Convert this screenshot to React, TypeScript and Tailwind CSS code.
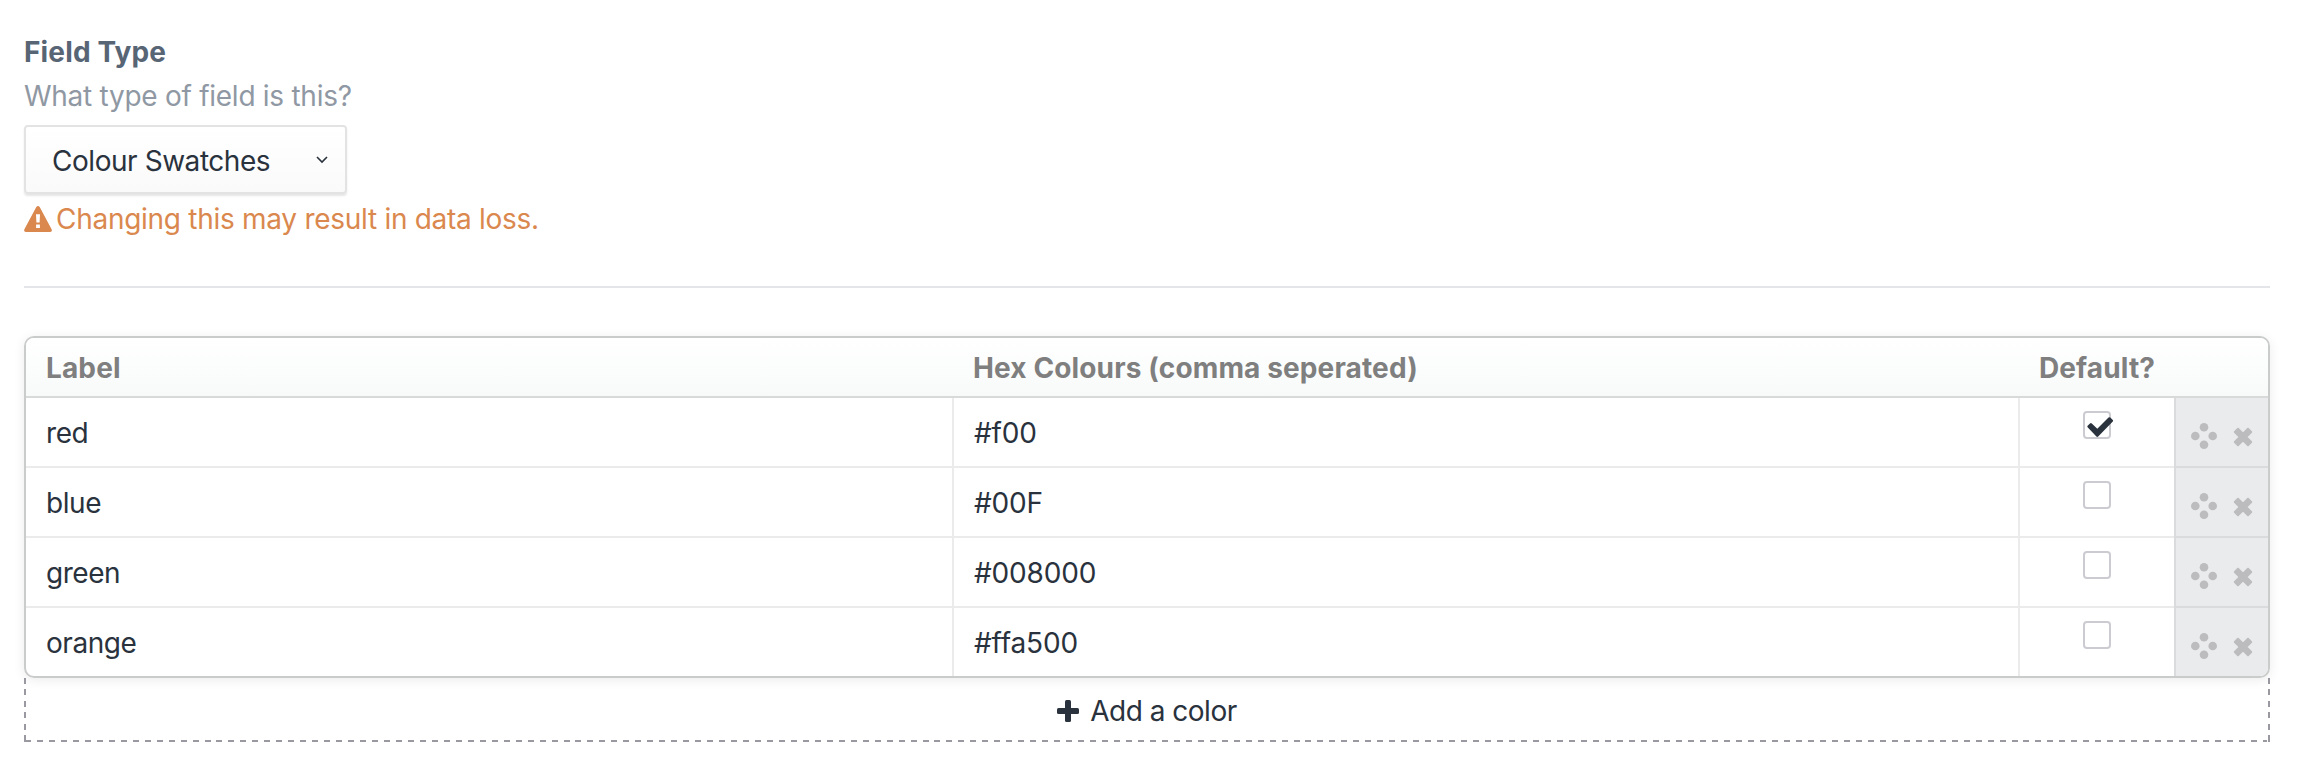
const rows = [
  { label: 'red', hex: '#f00', checked: true },
  { label: 'blue', hex: '#00F', checked: false },
  { label: 'green', hex: '#008000', checked: false },
  { label: 'orange', hex: '#ffa500', checked: false },
];

function AlertIcon() {
  return (
    <svg className="h-[26px] w-[28px] shrink-0" viewBox="0 0 28 26">
      <path
        fillRule="evenodd"
        fill="#DA884E"
        d="M12.3 1.1Q14 -1 15.7 1.1L27.6 23.2Q28.6 25.6 26.2 26H1.8Q-.6 25.6 .4 23.2ZM12 8.2L12.4 16.4H15.6L16 8.2ZM12.1 18.5V22H15.9V18.5Z"
      />
    </svg>
  );
}

function MoveIcon() {
  return (
    <svg className="h-[26px] w-[26px]" viewBox="0 0 26 26" fill="#BCBCBF">
      <circle cx="13" cy="4.3" r="4.3" />
      <circle cx="4.3" cy="13" r="4.3" />
      <circle cx="21.7" cy="13" r="4.3" />
      <circle cx="13" cy="21.7" r="4.3" />
    </svg>
  );
}

function RemoveIcon() {
  return (
    <svg className="h-5 w-5" viewBox="0 0 20 20" stroke="#BCBCBF" strokeWidth="2" strokeLinejoin="round" fill="#BCBCBF">
      <path d="M5 1.8L10 6.8L15 1.8L18.2 5L13.2 10L18.2 15L15 18.2L10 13.2L5 18.2L1.8 15L6.8 10L1.8 5Z" />
    </svg>
  );
}

function Checkbox({ checked }: { checked: boolean }) {
  return (
    <div className="relative h-7 w-7 rounded-[4px] border-2 border-[#CCCBD2] bg-white">
      {checked && (
        <svg className="absolute top-[3px] left-[2px] h-[22px] w-[27px]" viewBox="0 0 27 22">
          <path
            fill="#29323D"
            d="M.6 11.2Q0 10.4 .6 9.7L3 7.4Q4 6.7 4.8 7.4L10.3 12.7L21.5 1.6Q22.4 .8 23.3 1.6L25.8 4Q26.5 4.8 25.8 5.6L11.2 20.6Q10.3 21.4 9.4 20.6Z"
          />
        </svg>
      )}
    </div>
  );
}

export default function App() {
  return (
    <div className="h-[762px] w-full bg-white pt-8 pr-7 pl-6 font-[Inter,sans-serif] text-[28px] leading-10 text-[#29323D]">
      <div className="font-bold tracking-[0.15px] text-[#576575]"><span>Field Type</span></div>
      <div className="mt-1 tracking-[-0.27px] text-[#8F98A3]"><span>What type of field is this?</span></div>
      <div className="mt-[9px] flex h-[69px] w-[323px] items-center justify-between rounded-[4px] border-2 border-[#E3E3E3] bg-linear-to-b from-white to-[#FAFAFA] pr-[17px] pl-[26px] shadow-[0_2px_2px_rgba(0,0,0,0.1)]">
        <span className="pt-[3px] tracking-[-0.45px]">Colour Swatches</span>
        <svg className="h-[8px] w-3" viewBox="0 0 12 8" fill="none" stroke="#29323D" strokeWidth="1.6">
          <path d="M1 1L6 6L11 1" />
        </svg>
      </div>
      <div className="mt-[5px] flex items-center text-[#DA884E]">
        <AlertIcon />
        <span className="ml-1 tracking-[-0.28px]">Changing this may result in data loss.</span>
      </div>
      <div className="mt-[47px] h-0.5 bg-[#E3E5E8]" />
      <div className="mt-12 h-[342px] overflow-hidden rounded-[10px] border-2 border-[#CACBCB] shadow-[0_2px_12px_rgba(0,0,0,0.08)]">
        <div className="grid h-[60px] grid-cols-[928px_1066px_156px_92px] items-center border-b-2 border-[#D8DADA] bg-linear-to-b from-white to-[#F8FAFA] pt-0.5 font-bold tracking-[0.13px] text-[#7F7F7F]">
          <span className="pl-5">Label</span>
          <span className="pl-[19px]">Hex Colours (comma seperated)</span>
          <span className="pr-[2px] text-center">Default?</span>
        </div>
        {rows.map((row) => (
          <div key={row.label} className="grid h-[70px] grid-cols-[926px_1066px_156px_94px]">
            <div className="flex items-center border-b-2 border-[#EBEBEC] pt-px pl-5"><span className="tracking-[-0.45px]">{row.label}</span></div>
            <div className="flex items-center border-b-2 border-l-2 border-[#EBEBEC] pt-px pl-5"><span className="tracking-[-0.15px]">{row.hex}</span></div>
            <div className="flex justify-center border-b-2 border-l-2 border-[#EBEBEC] pt-[13px]">
              <Checkbox checked={row.checked} />
            </div>
            <div className="flex items-start border-b-2 border-l-2 border-[#DADBDC] bg-[#EAEBED] pt-[25px] pl-[15px]">
              <MoveIcon />
              <span className="mt-1 ml-4"><RemoveIcon /></span>
            </div>
          </div>
        ))}
      </div>
      <div className="flex h-16 bg-[repeating-linear-gradient(to_right,#9A99A1_0_6px,transparent_6px_11.967px)] bg-[length:calc(100%_-_4px)_2px] bg-[position:1px_bottom] bg-no-repeat">
        <div className="w-0.5 bg-[repeating-linear-gradient(to_bottom,#9A99A1_0_6px,transparent_6px_11.5px)]" />
        <div className="flex flex-1 items-center justify-center gap-[11px] pt-px">
          <svg className="h-[22px] w-[22px]" viewBox="0 0 22 22" fill="#29323D">
            <rect x="8" y="0" width="6" height="22" rx="1.5" />
            <rect x="0" y="8" width="22" height="6" rx="1.5" />
          </svg>
          <span className="tracking-[-0.5px]">Add a color</span>
        </div>
        <div className="w-0.5 bg-[repeating-linear-gradient(to_bottom,#9A99A1_0_6px,transparent_6px_11.5px)]" />
      </div>
    </div>
  );
}
